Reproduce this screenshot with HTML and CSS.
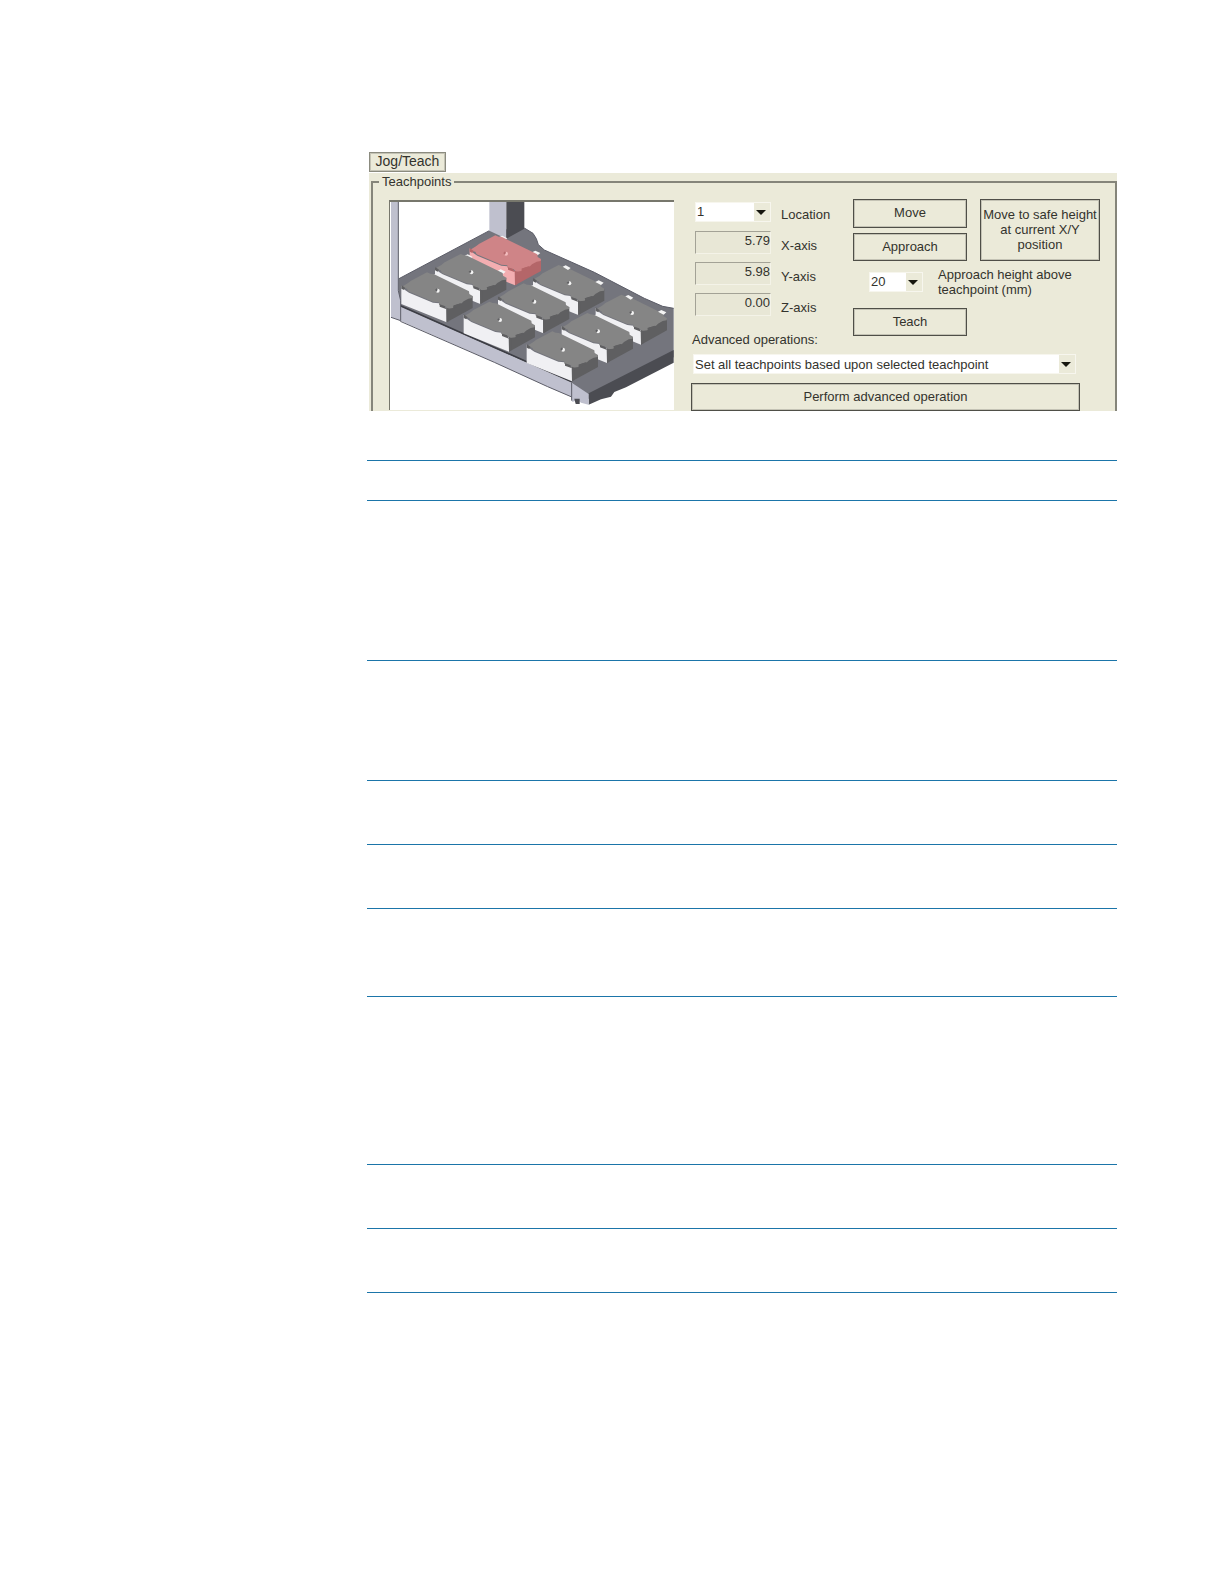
FILE: index.html
```html
<!DOCTYPE html>
<html lang="en">
<head>
    <meta charset="UTF-8">
    <meta name="viewport" content="width=device-width, initial-scale=1.0">
    <title>Jog/Teach</title>
    <link rel="stylesheet" href="styles.css">
</head>
<body>
    <main class="page">
        <button type="button" class="tab">Jog/Teach</button>
        <div class="panel">
            <fieldset class="teachpoints">
                <legend>Teachpoints</legend>
                <div class="content">
                    <div class="stage">
                        <svg viewBox="87 174 852 624" role="img" aria-label="Teachpoint locations">
                            <defs>
                                <!-- one plate, origin at the centre hole -->
                                <g id="plate">
                                    <path class="front" d="M-109-16V40L27 95V52L8 47L4 38L-14 36L-86 6L-98-2Z"/>
                                    <path class="side" d="M27 50L105 16V52L27 95Z"/>
                                    <path class="top" d="M-107-12L-90-22L-80-30L-32-55L-22-51L-12-50L94 2L95 10L105 16L104 22L92 24L78 32L72 38L50 44L46 52L30 54L23 47L4 42V35L-14 33L-88 2L-92-6L-102-8Z"/>
                                    <path class="notch" d="M-109-17V-6L-101-2L-97-8ZM6 41L21 46L27 56L6 48ZM46 45L68 38L72 42L49 53ZM26 52L34 54V91L27 95Z"/>
                                    <circle class="hole" r="6"/>
                                    <path class="notch" d="M-8-2L-3-7L0-3L-4 4Z"/>
                                </g>
                                <g id="clips">
                                    <path class="clip" d="M-118 8L-104 4L-95 14L-105 18ZM-20-50L-11-54L4-46L-4-40ZM78-4L88-9L103-2L95 5Z"/>
                                </g>
                            </defs>
                            <path class="deck" d="M112 405L385 260L490 252L516 268L526 284L532 302L550 318L700 385L850 463L905 487L938 493V640L683 765L630 715L112 487Z"/>
                            <path class="edge" d="M112 405L385 260M490 252L516 268L526 284L532 302L550 318L700 385L850 463L905 487L938 493"/>
                            <path class="rim-dark" d="M683 748L938 618V656L795 730L760 744L750 758L720 766L683 782Z"/>
                            <path class="rim" d="M118 487L630 715L683 750V782L660 776L650 768L634 774L630 758L560 728L400 655L118 530Z"/>
                            <path class="shadow" d="M118 485L632 713"/>
                            <path class="edge" d="M118 532L400 655L560 728L630 758M632 715V770"/>
                            <path class="rim-dark" d="M640 764H656V780H644Z"/>
                            <path class="post" d="M90 174H112V440L119 470V530L90 520Z"/>
                            <path class="edge" d="M112 174V440L119 470V530L90 520"/>
                            <path class="post" d="M385 174H436V284L385 260Z"/>
                            <path class="post-dark" d="M436 174H490V254L436 284Z"/>
                            <use href="#clips" x="435" y="329"/>
                            <use href="#plate" class="selected" x="435" y="329"/>
                            <use href="#clips" x="331" y="385"/>
                            <use href="#plate" x="331" y="385"/>
                            <use href="#plate" x="230" y="440"/>
                            <use href="#plate" x="625" y="418"/>
                            <use href="#clips" x="625" y="418"/>
                            <use href="#plate" x="520" y="473"/>
                            <use href="#plate" x="417" y="528"/>
                            <use href="#plate" x="813" y="507"/>
                            <use href="#clips" x="813" y="507"/>
                            <use href="#plate" x="711" y="562"/>
                            <use href="#plate" x="606" y="617"/>
                        </svg>
                    </div>
                    <div class="controls">
                        <div class="upper">
                            <div class="readings">
                                <span class="combo"><select id="location"><option>1</option></select></span>
                                <label for="location">Location</label>
                                <input id="x-axis" type="text" value="5.79" readonly>
                                <label for="x-axis">X-axis</label>
                                <input id="y-axis" type="text" value="5.98" readonly>
                                <label for="y-axis">Y-axis</label>
                                <input id="z-axis" type="text" value="0.00" readonly>
                                <label for="z-axis">Z-axis</label>
                            </div>
                            <div class="actions">
                                <button type="button">Move</button>
                                <button type="button" class="safe">Move to safe height<br>at current X/Y<br>position</button>
                                <button type="button">Approach</button>
                                <div class="height">
                                    <span class="combo"><select id="height"><option>20</option></select></span>
                                    <label for="height">Approach height above<br>teachpoint (mm)</label>
                                </div>
                                <button type="button">Teach</button>
                            </div>
                        </div>
                        <div class="advanced">
                            <label for="operation">Advanced operations:</label>
                            <span class="combo"><select id="operation"><option>Set all teachpoints based upon selected teachpoint</option></select></span>
                            <button type="button">Perform advanced operation</button>
                        </div>
                    </div>
                </div>
            </fieldset>
        </div>
        <div class="rules">
            <div class="row heading"></div>
            <div class="row tall"></div>
            <div class="row medium"></div>
            <div class="row"></div>
            <div class="row"></div>
            <div class="row three-line"></div>
            <div class="row tallest"></div>
            <div class="row"></div>
            <div class="row"></div>
        </div>
    </main>
</body>
</html>
```

FILE: styles.css
```css
* {
    box-sizing: border-box;
}
body {
    margin: 0;
    background: white;
    color: #33332d;
    font: 13px/15px "Liberation Sans", Arial, sans-serif;
}
.page {
    padding: 152px 107px 100px 367px;
}
button, input, select {
    font: inherit;
    color: inherit;
    margin: 0;
    border-radius: 0;
}
button {
    padding: 0 0 2px;
    background: #ebead9;
    border: 1px solid #4f4f48;
    box-shadow: inset 0 0 0 1px #c4c3b5;
}
.tab {
    display: block;
    width: 77px;
    height: 20px;
    margin: 0 0 1px 2px;
    font-size: 14px;
    border-color: #8b8b7f;
}
.panel {
    height: 238px;
    margin-left: 2px;
    padding: 0 0 0 2px;
    background: #ebead9;
    overflow: hidden;
}
.teachpoints {
    height: 246px;
    min-width: 0;
    margin: 0;
    padding: 0 15px 0 16px;
    border: 2px solid #85857a;
}
.teachpoints legend {
    margin-left: -10px;
    padding: 0 3px;
    line-height: 17px;
}
.content {
    display: flex;
    justify-content: space-between;
    padding-top: 10px;
}
.stage {
    width: 285px;
    height: 210px;
    background: white;
    border-top: 2px solid #77776c;
    border-left: 1px solid #77776c;
}
.stage svg {
    display: block;
    width: 284px;
    height: 208px;
}
.controls {
    width: 409px;
    margin-top: -1px;
}
.upper {
    display: flex;
    justify-content: space-between;
}
.readings {
    display: grid;
    grid-template-columns: 76px 65px;
    grid-auto-rows: 23px;
    gap: 8px 10px;
    padding: 1px 0 0 4px;
    align-items: center;
}
.readings label {
    padding-top: 6px;
}
.readings input {
    width: 76px;
    height: 23px;
    padding: 0 0 5px;
    text-align: right;
    background: #e8e7d6;
    border: 1px solid;
    border-color: #a3a296 #f4f3e8 #f4f3e8 #a3a296;
}
.combo {
    position: relative;
    display: block;
    height: 20px;
    background: white;
}
.combo select {
    appearance: none;
    display: block;
    width: 100%;
    height: 20px;
    padding: 0 20px 0 1px;
    background: white;
    border: 1px solid #f7f6ee;
}
/* drop-down button */
.combo::before {
    content: "";
    position: absolute;
    top: 1px;
    right: 1px;
    width: 16px;
    height: 18px;
    background: #ebead9;
    pointer-events: none;
}
.combo::after {
    content: "";
    position: absolute;
    top: 8px;
    right: 5px;
    border: 5px solid transparent;
    border-top-color: #17170f;
    border-bottom: 0;
    pointer-events: none;
}
.actions {
    display: grid;
    grid-template-columns: 114px 120px;
    grid-template-rows: 29px 28px 37px 28px;
    gap: 5px 13px;
}
.safe {
    grid-column: 2;
    grid-row: 1 / 3;
}
.height {
    grid-column: 1 / 3;
    display: flex;
    align-items: center;
    gap: 15px;
    padding: 0 0 6px 16px;
}
.height .combo {
    width: 54px;
}
.advanced {
    display: flex;
    flex-direction: column;
    width: 389px;
    margin-top: -4px;
}
.advanced label {
    padding: 0 1px 7px;
}
.advanced .combo {
    margin: 0 4px 9px 2px;
}
.advanced button {
    height: 28px;
}
.rules {
    margin-top: 49px;
    border-bottom: 1px solid #1b75a9;
}
.row {
    height: 64px;
    border-top: 1px solid #1b75a9;
}
.heading {
    height: 40px;
}
.tall {
    height: 160px;
}
.medium {
    height: 120px;
}
.three-line {
    height: 88px;
}
.tallest {
    height: 168px;
}

/* stage drawing */
.deck {
    fill: #74757d;
}
.rim, .post {
    fill: #bfc0ce;
}
.rim-dark, .post-dark {
    fill: #4b4c52;
}
.edge, .shadow {
    fill: none;
    stroke: #5c5d68;
    stroke-width: 3;
}
.shadow {
    stroke: #3c3d44;
    stroke-width: 5;
}
.top {
    fill: var(--top, #858585);
}
.front {
    fill: var(--front, #f0f0f3);
}
.side, .notch {
    fill: var(--side, #5f5f61);
}
.hole {
    fill: var(--hole, #f4f4f4);
}
.clip {
    fill: #f4f4f4;
}
.selected {
    --top: #cf8487;
    --front: #f3aeb1;
    --side: #b46669;
    --hole: #f3bcbe;
}
```
